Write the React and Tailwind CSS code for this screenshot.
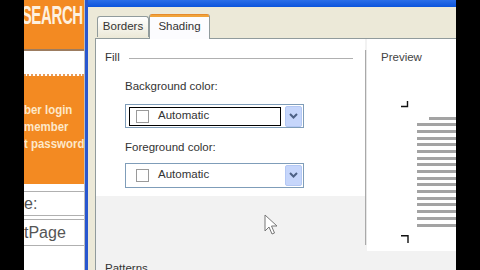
import React from 'react';

const ui = { fontFamily: '"Liberation Sans", Arial, sans-serif' };

const Chevron = () => (
  <svg width="9" height="6" viewBox="0 0 9 6">
    <path d="M1 1 L4.5 4.5 L8 1" fill="none" stroke="#4d6185" strokeWidth="2" />
  </svg>
);

const ColorCombo = ({ selected, className }) => (
  <div className={`flex items-center w-[179px] border border-[#7f9db9] bg-white ${className}`}>
    <div
      className={`flex items-center flex-1 h-[19px] ml-[3px] border ${
        selected ? 'border-black' : 'border-transparent'
      }`}
    >
      <div className="w-[13px] h-[13px] ml-[6px] border border-[#9a9a9a] bg-white" />
      <span className="ml-[9px] text-[11.5px] leading-none text-[#333]">Automatic</span>
    </div>
    <div className="flex items-center justify-center w-[17px] h-[21px] mx-[1px] ml-[4px] bg-[#c6d6fb] border border-[#b4c8f4] rounded-[2px]">
      <Chevron />
    </div>
  </div>
);

const Cursor = () => (
  <svg className="absolute left-[264px] top-[214px]" width="14" height="22" viewBox="0 0 14 22">
    <path
      d="M1 1 L1 17 L5 13 L8 20 L10.5 19 L7.5 12 L13 12 Z"
      fill="#fff"
      stroke="#777"
      strokeWidth="1"
      strokeLinejoin="round"
    />
  </svg>
);

const LeftPage = () => (
  <div className="w-[61px] flex flex-col overflow-hidden bg-white border-r border-[#bdbdbd]">
    <div className="h-[49px] bg-[#f38a22] flex justify-end pt-[3px] pr-[1px]">
      <span
        className="inline-block origin-right scale-x-[0.6] text-[25px] font-bold leading-none text-[#fdf1e0] tracking-tight"
        style={{ fontFamily: '"Liberation Sans", Arial, sans-serif' }}
      >
        SEARCH
      </span>
    </div>
    <div className="h-[2px] bg-[#9c7c60]" />
    <div className="h-[25px] bg-white border-b-2 border-dotted border-[#e79c58]" />
    <div
      className="h-[108px] bg-[#f38a22] flex flex-col pt-[25px] text-[13px] font-bold leading-[17px] text-[#fde8c9] whitespace-nowrap"
      style={ui}
    >
      <span className="inline-block origin-left scale-x-[0.88]">ber login</span>
      <span className="inline-block origin-left scale-x-[0.88]">member</span>
      <span className="inline-block origin-left scale-x-[0.88]">t password</span>
    </div>
    <div className="h-[8px] bg-white border-b border-[#b0b0b0]" />
    <div className="h-[24px] flex items-center text-[16px] text-[#555] border-b border-[#b0b0b0]" style={ui}>
      e:
    </div>
    <div className="h-[4px] border-b border-[#b0b0b0]" />
    <div className="h-[26px] flex items-center text-[16px] text-[#555] border-b border-[#b0b0b0] whitespace-nowrap" style={ui}>
      tPage
    </div>
  </div>
);

const PreviewLines = () => {
  const rows = Array.from({ length: 17 });
  return (
    <div className="flex flex-col gap-[3.7px] ml-[50px]">
      {rows.map((_, i) => (
        <div key={i} className={`h-[3px] bg-[#a3a3a3] ${i === 0 ? 'ml-[12px]' : ''}`} />
      ))}
    </div>
  );
};

const Dialog = () => (
  <div className="flex-1 flex flex-col bg-[#ece9d8] min-w-0" style={ui}>
    {/* title bar, mostly cut off */}
    <div className="h-[7px] bg-gradient-to-b from-[#2a6ee8] to-[#0a54dc]" />

    {/* tabs */}
    <div className="h-[31px] flex items-end pl-[9px]">
      <div className="h-[21px] w-[52px] flex items-center justify-center border border-b-0 border-[#919b9c] rounded-t-[3px] bg-gradient-to-b from-white to-[#ece9d8] text-[11.5px] text-[#333] mb-[1px]">
        Borders
      </div>
      <div className="h-[25px] w-[61px] -mb-[1px] flex flex-col border-x border-[#919b9c] rounded-t-[3px] bg-[#fcfcfe] relative z-10">
        <div className="h-[3px] bg-[#f0a33a] rounded-t-[2px] border-t border-[#e68b2c]" />
        <div className="flex-1 flex items-center justify-center text-[11.5px] text-[#333] pb-[3px]">Shading</div>
      </div>
    </div>

    {/* panel */}
    <div className="flex-1 ml-[7px] flex border-l border-t border-[#919b9c] bg-[#f2f2f2] relative">
      {/* fill column */}
      <div className="w-[269px] flex flex-col">
        <div className="flex flex-col bg-white pb-[8px]">
          <div className="flex items-center pl-[9px] pt-[13px] pr-[12px] gap-[9px]">
            <span className="text-[11.5px] leading-none text-[#333]">Fill</span>
            <div className="flex-1 h-px bg-[#b0b0b0] mt-[2px]" />
          </div>
          <div className="pl-[29px] mt-[17px] text-[11.5px] leading-none text-[#333]">Background color:</div>
          <ColorCombo selected className="ml-[29px] mt-[12px] h-[24px]" />
          <div className="pl-[29px] mt-[14px] text-[11.5px] leading-none text-[#333]">Foreground color:</div>
          <ColorCombo className="ml-[29px] mt-[9px] h-[25px]" />
        </div>
        <div className="mt-auto pl-[9px] pb-[0px] text-[11.5px] leading-none text-[#333] translate-y-[4px]">Patterns</div>
      </div>

      {/* separator */}
      <div className="w-[2px] mt-[11px] h-[195px] bg-[#a9a9a9] border-r border-[#e6e6e6]" />

      {/* preview column */}
      <div className="flex-1 flex flex-col">
        <div className="bg-white h-[212px] flex flex-col">
          <div className="pl-[14px] pt-[13px] text-[11.5px] leading-none text-[#444]">Preview</div>
          <svg className="ml-[34px] mt-[37px]" width="8" height="7" viewBox="0 0 8 7">
            <path d="M0 5.5 H6.5 V0" fill="none" stroke="#111" strokeWidth="1.4" />
          </svg>
          <div className="mt-[9px]">
            <PreviewLines />
          </div>
          <svg className="ml-[34px] mt-[8px]" width="8" height="8" viewBox="0 0 8 8">
            <path d="M0 0.8 H7 V8" fill="none" stroke="#111" strokeWidth="1.4" />
          </svg>
        </div>
      </div>
    </div>
  </div>
);

export default function App() {
  return (
    <div className="w-[480px] h-[270px] overflow-hidden flex bg-black relative">
      <div className="w-[24px] bg-black" />
      <LeftPage />
      <div className="w-[3px] bg-[#2857cf]" />
      <Dialog />
      <div className="w-[24px] bg-black" />
      <Cursor />
    </div>
  );
}
